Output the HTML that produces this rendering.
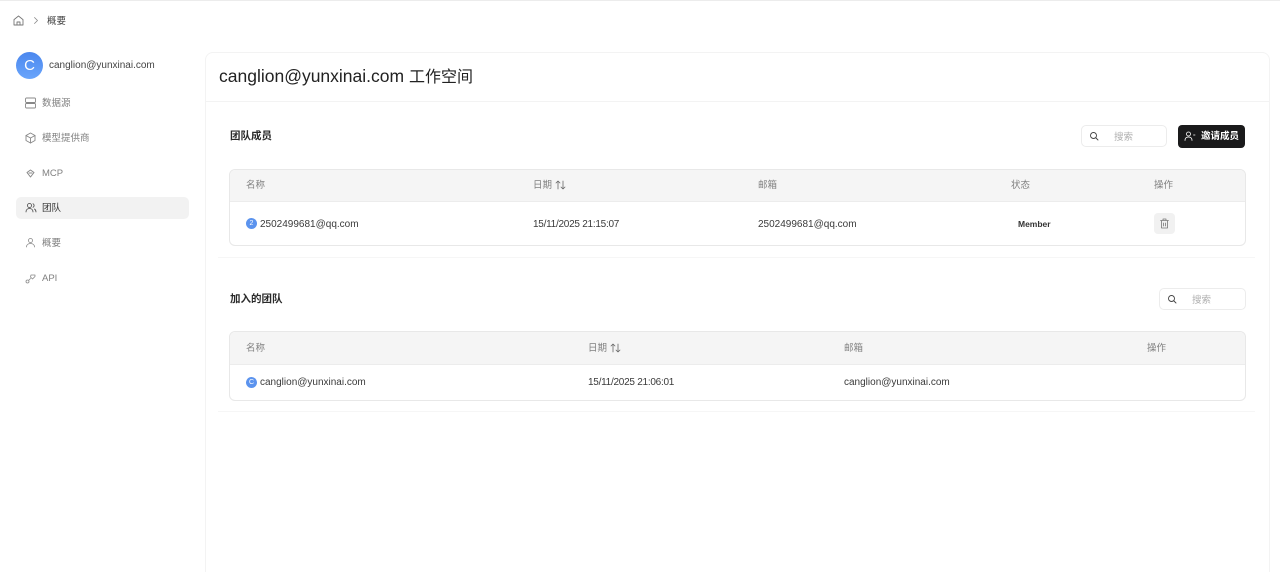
<!DOCTYPE html>
<html lang="zh"><head><meta charset="utf-8"><style>
*{box-sizing:border-box}
html,body{margin:0;padding:0;width:1280px;height:572px;overflow:hidden;background:#fff}
body{position:relative;font-family:"Liberation Sans","Noto Sans CJK SC",sans-serif;color:#222}
.a{position:absolute;white-space:nowrap}
svg{position:absolute;fill:none;stroke-linecap:round;stroke-linejoin:round}
.nav{font-size:9.500px;color:#808080;line-height:14px;left:42px}
.th{font-size:9.500px;color:#808080;line-height:14px}
.td{font-size:10px;color:#3a3a3a;line-height:14px}
.dt{letter-spacing:-.26px}
.box{position:absolute;border:1px solid #e8e8e8;border-radius:6px;overflow:hidden;background:#fff}
.hd{background:#f5f5f5;border-bottom:1px solid #ececec;width:100%}
.search{position:absolute;border:1px solid #ececec;border-radius:5px;height:22px;background:#fff}
.av{position:absolute;width:11px;height:11px;border-radius:50%;background:#5b93ee;color:#fff;font-size:7px;line-height:11px;text-align:center}
</style></head><body>
<div class="a" style="left:0;top:0;width:1280px;height:1px;background:#ececec"></div>
<svg style="left:13px;top:15px" width="11" height="11" viewBox="0 0 11 11" stroke="#777" stroke-width=".9"><path d="M1 4.600 5.500 1 10 4.600V10H1Z"/><path d="M4 10V7h3v3"/></svg>
<svg style="left:33px;top:16px" width="6" height="9" viewBox="0 0 6 9" stroke="#888" stroke-width=".8"><path d="M1.500 1.500 4.500 4.500 1.500 7.500"/></svg>
<div class="a" style="left:47px;top:15px;font-size:9.500px;line-height:14px;color:#444">概要</div>
<div class="a" style="left:16px;top:52px;width:27px;height:27px;border-radius:50%;background:linear-gradient(#4b87ee,#69a5fb);color:#fff;font-size:15px;line-height:27px;text-align:center">C</div>
<div class="a" style="left:49px;top:59px;font-size:10px;line-height:14px;color:#444">canglion@yunxinai.com</div>
<svg style="left:25px;top:97px" width="11" height="12" viewBox="0 0 11 12" stroke="#888" stroke-width=".9"><rect x=".5" y="1" width="10" height="4.500" rx="1"/><rect x=".5" y="6.500" width="10" height="4.500" rx="1"/></svg>
<div class="a nav" style="top:97px">数据源</div>
<svg style="left:25px;top:132px" width="11" height="12" viewBox="0 0 11 12" stroke="#888" stroke-width=".9"><path d="M5.500 1 10 3.500v5L5.500 11 1 8.500v-5Z"/><path d="M1 3.500 5.500 6 10 3.500M5.500 6v5"/></svg>
<div class="a nav" style="top:132px">模型提供商</div>
<svg style="left:26px;top:169px" width="9" height="9" viewBox="0 0 9 9" stroke="#888" stroke-width="1"><path d="M1 3.500 4.500 1 8 3.500 4.500 8Z"/><path d="M3 4h3"/></svg>
<div class="a nav" style="top:167px">MCP</div>
<div class="a" style="left:16px;top:197px;width:173px;height:22px;border-radius:5px;background:#f2f2f2"></div>
<svg style="left:25px;top:202px" width="12" height="12" viewBox="0 0 12 12" stroke="#444" stroke-width=".8"><circle cx="4.500" cy="3.500" r="2"/><path d="M1 10c0-2.200 1.500-3.500 3.500-3.500S8 7.800 8 10M8 1.700a2 2 0 0 1 0 3.600M9.500 7c1 .7 1.500 1.700 1.500 3"/></svg>
<div class="a nav" style="top:202px;color:#333">团队</div>
<svg style="left:25px;top:237px" width="11" height="12" viewBox="0 0 11 12" stroke="#888" stroke-width=".8"><circle cx="5.500" cy="3.500" r="2"/><path d="M1.500 10c0-2.200 1.700-3.500 4-3.500s4 1.300 4 3.500"/></svg>
<div class="a nav" style="top:237px">概要</div>
<svg style="left:25px;top:273px" width="11" height="11" viewBox="0 0 11 11" stroke="#888" stroke-width=".8"><circle cx="2.500" cy="8.500" r="1.500"/><path d="M4 7 5.500 5.500"/><path d="M6 2h4v1.500L7.500 6 5.500 4Z"/></svg>
<div class="a nav" style="top:272px">API</div>

<div class="a" style="left:205px;top:52px;width:1065px;height:540px;border:1px solid #f3f3f3;border-radius:8px"></div>
<div class="a" style="left:205px;top:101px;width:1065px;height:1px;background:#f3f3f3"></div>
<div class="a" style="left:219px;top:65px;font-size:17.500px;line-height:22px;color:#222">canglion@yunxinai.com <span style="font-size:16px">工作空间</span></div>
<div class="a" style="left:218px;top:257px;width:1037px;height:1px;background:#f6f6f6"></div>
<div class="a" style="left:218px;top:411px;width:1037px;height:1px;background:#f6f6f6"></div>

<div class="a" style="left:230px;top:129px;font-size:10.500px;line-height:14px;font-weight:700;color:#2a2a2a">团队成员</div>
<div class="search" style="left:1081px;top:125px;width:86px"></div>
<svg style="left:1089px;top:131px" width="10" height="10" viewBox="0 0 10 10" stroke="#444" stroke-width=".9"><circle cx="4.500" cy="4.500" r="3"/><path d="m7 7 2 2"/></svg>
<div class="a" style="left:1114px;top:131px;font-size:9.500px;line-height:14px;color:#b0b0b0">搜索</div>
<div class="a" style="left:1178px;top:125px;width:67px;height:23px;border-radius:4px;background:#1a1a1b"></div>
<svg style="left:1184px;top:131px" width="12" height="11" viewBox="0 0 12 11" stroke="#fff" stroke-width=".8"><circle cx="4.500" cy="3" r="2"/><path d="M1 9.500c0-2.300 1.500-3.500 3.500-3.500S8 7.200 8 9.500M9.500 4h1.500"/></svg>
<div class="a" style="left:1201px;top:130px;font-size:9.500px;line-height:14px;font-weight:700;color:#fff">邀请成员</div>

<div class="box" style="left:229px;top:169px;width:1017px;height:77px"><div class="hd" style="height:32px"></div></div>
<div class="a th" style="left:246px;top:179px">名称</div>
<div class="a th" style="left:533px;top:179px">日期</div>
<svg style="left:555px;top:180px" width="11" height="10" viewBox="0 0 11 10" stroke="#666" stroke-width=".8"><path d="M3 9V1M1 3l2-2 2 2M8 1v8M6 7l2 2 2-2"/></svg>
<div class="a th" style="left:758px;top:179px">邮箱</div>
<div class="a th" style="left:1011px;top:179px">状态</div>
<div class="a th" style="left:1154px;top:179px">操作</div>
<div class="av" style="left:246px;top:218px">2</div>
<div class="a td" style="left:260px;top:218px">2502499681@qq.com</div>
<div class="a td dt" style="left:533px;top:218px">15/11/2025 21:15:07</div>
<div class="a td" style="left:758px;top:218px">2502499681@qq.com</div>
<div class="a" style="left:1018px;top:217px;font-size:8.500px;line-height:14px;font-weight:700;color:#333">Member</div>
<div class="a" style="left:1154px;top:213px;width:21px;height:21px;border-radius:4px;background:#f1f1f1"></div>
<svg style="left:1159px;top:218px" width="11" height="11" viewBox="0 0 11 11" stroke="#777" stroke-width=".8"><path d="M1.500 2.500h8M4 2.500V1h3v1.500M2.500 2.500V10h6V2.500M4.500 5v3M6.500 5v3"/></svg>

<div class="a" style="left:230px;top:292px;font-size:10.500px;line-height:14px;font-weight:700;color:#2a2a2a">加入的团队</div>
<div class="search" style="left:1159px;top:288px;width:87px"></div>
<svg style="left:1167px;top:294px" width="10" height="10" viewBox="0 0 10 10" stroke="#444" stroke-width=".9"><circle cx="4.500" cy="4.500" r="3"/><path d="m7 7 2 2"/></svg>
<div class="a" style="left:1192px;top:294px;font-size:9.500px;line-height:14px;color:#b0b0b0">搜索</div>

<div class="box" style="left:229px;top:331px;width:1017px;height:70px"><div class="hd" style="height:33px"></div></div>
<div class="a th" style="left:246px;top:342px">名称</div>
<div class="a th" style="left:588px;top:342px">日期</div>
<svg style="left:610px;top:343px" width="11" height="10" viewBox="0 0 11 10" stroke="#666" stroke-width=".8"><path d="M3 9V1M1 3l2-2 2 2M8 1v8M6 7l2 2 2-2"/></svg>
<div class="a th" style="left:844px;top:342px">邮箱</div>
<div class="a th" style="left:1147px;top:342px">操作</div>
<div class="av" style="left:246px;top:377px">C</div>
<div class="a td" style="left:260px;top:376px">canglion@yunxinai.com</div>
<div class="a td dt" style="left:588px;top:376px">15/11/2025 21:06:01</div>
<div class="a td" style="left:844px;top:376px">canglion@yunxinai.com</div>
</body></html>
